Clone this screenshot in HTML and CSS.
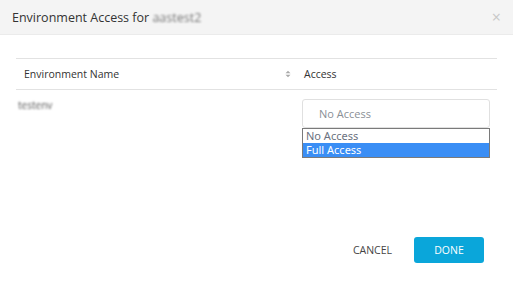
FILE: index.html
```html
<!DOCTYPE html>
<html lang="en">
<head>
    <meta charset="UTF-8">
    <meta name="viewport" content="width=device-width, initial-scale=1.0">
    <title>Environment Access</title>
    <link rel="stylesheet" href="styles.css">
</head>
<body>
    <div class="modal">
        <!-- Cabeçalho -->
        <div class="modal-header">
            <span class="modal-title">Environment Access for <span class="blurred">aastest2</span></span>
            <span class="close">&times;</span>
        </div>

        <div class="modal-body">
            <table class="access-table">
                <thead>
                    <tr>
                        <th class="col-name">
                            <div class="th-inner">
                                <span>Environment Name</span>
                                <svg class="sort-icon" width="6" height="8" viewBox="0 0 6 8">
                                    <path d="M0.5 3.2 L3 0.8 L5.5 3.2 Z M0.5 4.8 L3 7.2 L5.5 4.8 Z" fill="#aaa"/>
                                </svg>
                            </div>
                        </th>
                        <th class="col-access">Access</th>
                    </tr>
                </thead>
                <tbody>
                    <tr>
                        <td class="env-cell"><span class="blurred small">testenv</span></td>
                        <td class="access-cell">
                            <div class="select-wrap">
                                <div class="select-box">No Access</div>
                                <ul class="select-list">
                                    <li>No Access</li>
                                    <li class="active">Full Access</li>
                                </ul>
                            </div>
                        </td>
                    </tr>
                </tbody>
            </table>
        </div>

        <div class="modal-footer">
            <button type="button" class="btn-cancel">CANCEL</button>
            <button type="button" class="btn-done">DONE</button>
        </div>
    </div>
</body>
</html>
```

FILE: styles.css
```css
body {
    margin: 0;
    font-family: "Open Sans", "Noto Sans", sans-serif;
    background-color: #fff;
    color: #333;
}
.modal {
    width: 513px;
    height: 282px;
    display: flex;
    flex-direction: column;
}
.modal-header {
    height: 34px;
    display: flex;
    align-items: center;
    justify-content: space-between;
    padding: 0 12px;
    background-color: #f4f4f4;
    border-bottom: 1px solid #ebebeb;
}
.modal-title {
    font-size: 12.5px;
    color: #333;
}
.blurred {
    color: #777;
    filter: blur(1px); /* nome escondido */
}
.blurred.small {
    font-size: 10px;
    color: #555;
}
.close {
    font-size: 16px;
    color: #c8c8c8;
    margin-right: 0;
}
.modal-body {
    padding: 23px 16px 0;
    flex: 1;
}
.access-table {
    width: 481px;
    border-collapse: collapse;
    font-size: 10.5px;
}
.access-table th {
    text-align: left;
    font-weight: normal;
    height: 30px;
    border-top: 1px solid #e2e2e2;
    border-bottom: 1px solid #e2e2e2;
    padding: 0;
}
.col-name {
    width: 280px;
}
.th-inner {
    display: flex;
    align-items: center;
    justify-content: space-between;
    padding: 0 5px 0 8px;
}
.col-access {
    padding-left: 8px !important;
}
.access-table td {
    vertical-align: top;
    padding: 0;
}
.env-cell {
    padding: 8px 0 0 2px !important;
}
.access-cell {
    padding: 9px 0 0 6px !important;
}
.select-wrap {
    width: 188px;
}
.select-box {
    height: 27px;
    border: 1px solid #e0e0e0;
    border-radius: 3px;
    box-sizing: content-box;
    display: flex;
    align-items: center;
    padding-left: 16px;
    font-size: 11px;
    color: #8a8f96;
}
.select-list {
    list-style: none;
    margin: 0;
    padding: 0;
    border: 1px solid #7a7a7a;
    font-family: "Noto Sans", "Open Sans", sans-serif;
    font-size: 11px;
}
.select-list li {
    height: 14px;
    line-height: 14px;
    padding-left: 3px;
    color: #6b7280;
}
.select-list li.active {
    background-color: #3a8ef5;
    color: #fff;
}
.modal-footer {
    display: flex;
    justify-content: flex-end;
    align-items: center;
    gap: 22px;
    padding: 0 29px 19px 0;
}
.btn-cancel {
    font-family: inherit;
    font-size: 10.5px;
    color: #444;
    background: none;
    border: none;
    padding: 0;
    cursor: pointer;
}
.btn-done {
    font-family: inherit;
    font-size: 10.5px;
    width: 70px;
    height: 26px;
    background-color: #0aa6da;
    color: #fff;
    border: none;
    border-radius: 3px;
    cursor: pointer;
}
```
